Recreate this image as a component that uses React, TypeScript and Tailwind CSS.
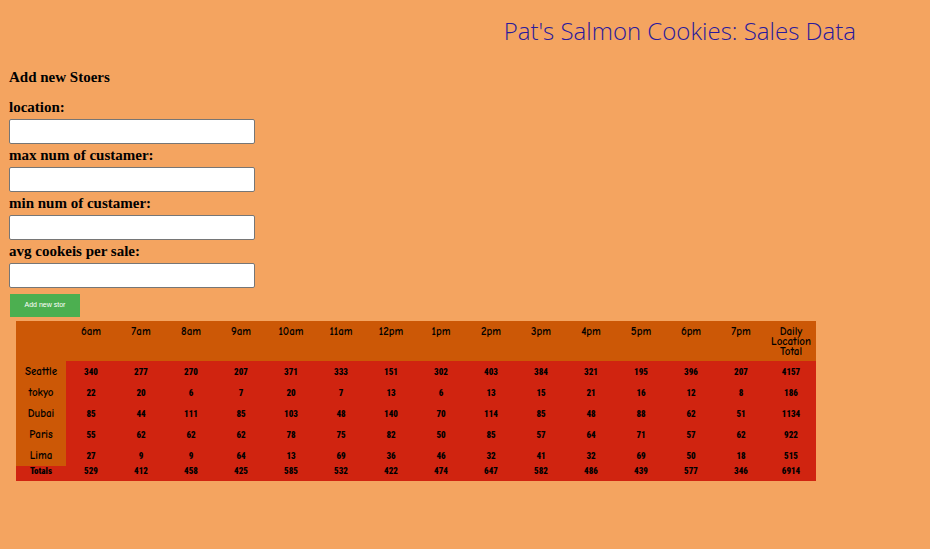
const hours = ['6am', '7am', '8am', '9am', '10am', '11am', '12pm', '1pm', '2pm', '3pm', '4pm', '5pm', '6pm', '7pm'];

const stores = [
  { name: 'Seattle', sales: [340, 277, 270, 207, 371, 333, 151, 302, 403, 384, 321, 195, 396, 207, 4157] },
  { name: 'tokyo', sales: [22, 20, 6, 7, 20, 7, 13, 6, 13, 15, 21, 16, 12, 8, 186] },
  { name: 'Dubai', sales: [85, 44, 111, 85, 103, 48, 140, 70, 114, 85, 48, 88, 62, 51, 1134] },
  { name: 'Paris', sales: [55, 62, 62, 62, 78, 75, 82, 50, 85, 57, 64, 71, 57, 62, 922] },
  { name: 'Lima', sales: [27, 9, 9, 64, 13, 69, 36, 46, 32, 41, 32, 69, 50, 18, 515] },
];

const totals = [529, 412, 458, 425, 585, 532, 422, 474, 647, 582, 486, 439, 577, 346, 6914];

const fields = [
  { id: 'location', label: 'location:' },
  { id: 'max', label: 'max num of custamer:' },
  { id: 'min', label: 'min num of custamer:' },
  { id: 'avg', label: 'avg cookeis per sale:' },
];

const comic = "font-['Comic_Sans_MS','Comic_Neue','Open_Sans',sans-serif] text-[11px] leading-[10px] font-semibold";
const impact = "font-['Roboto_Condensed','Liberation_Sans_Narrow',Roboto,sans-serif] text-[9px] leading-[10px] font-black";

function StoreForm() {
  return (
    <form className="px-[9px] font-['Liberation_Serif',serif] text-[15px] font-bold" onSubmit={(e) => e.preventDefault()}>
      <h2 className="mb-[7px] leading-6">Add new Stoers</h2>
      {fields.map((f) => (
        <div key={f.id} className="flex flex-col items-start">
          <label htmlFor={f.id} className="leading-[23px]">{f.label}</label>
          <input id={f.id} type="text" className="h-[25px] w-[246px] rounded-xs border border-[#767676] bg-white px-1 font-normal" />
        </div>
      ))}
      <button type="submit" className="mt-[6px] ml-px block h-[23px] w-[70px] bg-[#4caf50] font-['Liberation_Sans',sans-serif] text-[7px] font-normal text-white">
        Add new stor
      </button>
    </form>
  );
}

function SalesTable() {
  return (
    <table className="mt-1 ml-4 w-[800px] table-fixed border-collapse bg-[#d02410] text-center text-black">
      <thead className={comic}>
        <tr className="h-10 bg-[#cc5806] align-top">
          <th className="p-0" />
          {hours.map((h) => (
            <th key={h} scope="col" className="p-0 pt-[6px] font-semibold">{h}</th>
          ))}
          <th scope="col" className="p-0 pt-[6px] font-semibold">Daily Location Total</th>
        </tr>
      </thead>
      <tbody className={impact}>
        {stores.map((s) => (
          <tr key={s.name} className="h-[21px]">
            <th scope="row" className={`bg-[#cc5806] p-0 ${comic}`}>{s.name}</th>
            {s.sales.map((n, i) => (
              <td key={i} className="p-0">{n}</td>
            ))}
          </tr>
        ))}
      </tbody>
      <tfoot className={impact}>
        <tr className="h-[15px] align-top">
          <th scope="row" className="p-0 font-black">Totals</th>
          {totals.map((n, i) => (
            <td key={i} className="p-0">{n}</td>
          ))}
        </tr>
      </tfoot>
    </table>
  );
}

export default function App() {
  return (
    <main className="min-h-screen bg-[#f4a460] text-black">
      <h1 className="mb-[2px] pt-[15px] pr-[74px] text-right font-['Open_Sans','Noto_Sans',sans-serif] text-[24px] leading-8 font-light text-[#2a1a9c]">
        Pat's Salmon Cookies: Sales Data
      </h1>
      <div className="pt-4">
        <StoreForm />
        <SalesTable />
      </div>
    </main>
  );
}
